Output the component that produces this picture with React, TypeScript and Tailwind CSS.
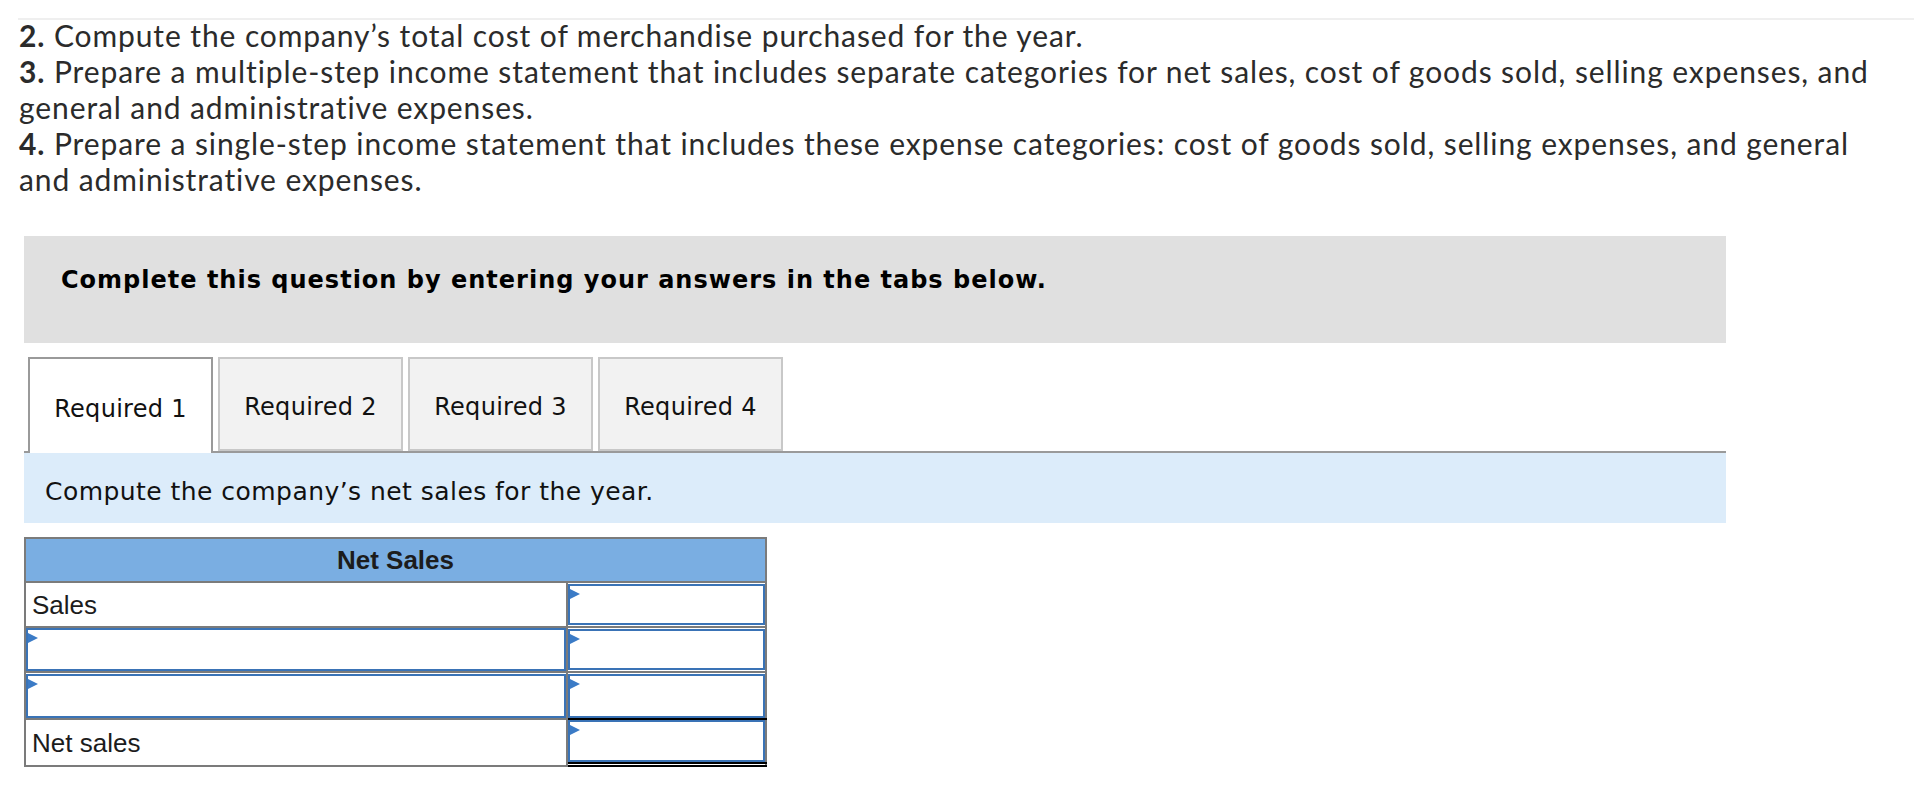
import React from 'react';

const tabs = ['Required 1', 'Required 2', 'Required 3', 'Required 4'];

const Marker: React.FC = () => (
  <span className="absolute left-0 top-[3px] h-0 w-0 border-y-[5px] border-l-[10px] border-y-transparent border-l-[#3b7bc6]" />
);

const InputBox: React.FC = () => (
  <div className="relative h-full w-full border-2 border-[#3a73b6] bg-white">
    <Marker />
  </div>
);

const App: React.FC = () => {
  return (
    <div className="h-[786px] w-[1914px] overflow-hidden bg-white">
      <div className="pt-[18px]">
        <div className="ml-[18px] h-[2px] bg-[#efefef]" />
        <div className="-mt-[3px] pl-[19px] pr-[20px] font-['Lato',sans-serif] text-[30px] leading-[36px] tracking-[0.9px] text-[#2b2b2b]">
          <p>
            <b>2.</b> Compute the company’s total cost of merchandise purchased for the year.
          </p>
          <p>
            <b>3.</b> Prepare a multiple-step income statement that includes separate categories for net sales, cost of goods sold, selling expenses, and general and administrative expenses.
          </p>
          <p>
            <b>4.</b> Prepare a single-step income statement that includes these expense categories: cost of goods sold, selling expenses, and general and administrative expenses.
          </p>
        </div>
      </div>

      <div className="ml-[24px] mt-[39px] h-[107px] w-[1702px] bg-[#e0e0e0] pl-[37px] pt-[31px] font-['DejaVu_Sans',sans-serif] text-[24px] font-bold leading-[26px] tracking-[1px] text-black">
        Complete this question by entering your answers in the tabs below.
      </div>

      <div className="ml-[24px] mt-[14px] w-[1702px]">
        <div className="flex gap-[5px] border-b-2 border-[#9a9a9a] pl-[4px] font-['DejaVu_Sans',sans-serif] text-[24px] tracking-[0.3px] text-[#111]">
          {tabs.map((t, i) =>
            i === 0 ? (
              <div
                key={t}
                className="-mb-[2px] flex h-[96px] w-[185px] items-center justify-center border-2 border-b-0 border-[#9a9a9a] bg-white pt-[5px]"
              >
                {t}
              </div>
            ) : (
              <div
                key={t}
                className="flex h-[94px] w-[185px] items-center justify-center border-2 border-[#c8c8c8] bg-[#f2f2f2] pt-[6px]"
              >
                {t}
              </div>
            )
          )}
        </div>
        <div className="flex h-[70px] items-center bg-[#dcecfa] pl-[21px] pt-[7px] font-['DejaVu_Sans',sans-serif] text-[25px] tracking-[0.45px] text-[#111]">
          Compute the company’s net sales for the year.
        </div>
      </div>

      <div className="ml-[24px] mt-[14px] w-[743px] border-x-2 border-t-2 border-[#7b7b7b] font-['Liberation_Sans',sans-serif] text-[26px] text-[#1c1c1c]">
        <div className="flex h-[44px] items-center justify-center border-b-2 border-[#7b7b7b] bg-[#7aaee2] text-[26px] font-bold">
          Net Sales
        </div>
        <div className="flex h-[45px]">
          <div className="flex w-[542px] items-center border-b-2 border-r-2 border-[#7b7b7b] pl-[6px] pt-[2px]">Sales</div>
          <div className="flex-1 border-b-2 border-[#7b7b7b] py-[1px]">
            <InputBox />
          </div>
        </div>
        <div className="flex h-[45px]">
          <div className="w-[542px] border-b-2 border-r-2 border-[#7b7b7b]">
            <InputBox />
          </div>
          <div className="flex-1 border-b-2 border-[#7b7b7b] py-[1px]">
            <InputBox />
          </div>
        </div>
        <div className="flex h-[47px]">
          <div className="w-[542px] border-b-2 border-r-2 border-[#7b7b7b] pt-[1px]">
            <InputBox />
          </div>
          <div className="-mr-[2px] flex-1 border-b-2 border-black pr-[2px] pt-[1px]">
            <InputBox />
          </div>
        </div>
        <div className="flex h-[47px]">
          <div className="flex w-[542px] items-center border-b-2 border-r-2 border-[#7b7b7b] pl-[6px] pt-[2px]">Net sales</div>
          <div className="-mr-[2px] flex-1 border-b-[5px] border-double border-black pr-[2px]">
            <InputBox />
          </div>
        </div>
      </div>
    </div>
  );
};

export default App;
